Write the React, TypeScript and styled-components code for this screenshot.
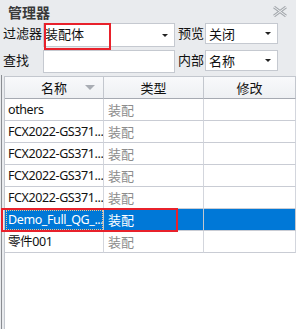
import React from "react";
import styled, { createGlobalStyle } from "styled-components";

const GlobalStyle = createGlobalStyle`
    html, body {
        margin: 0;
        padding: 0;
        background: #e9ebee;
    }
    body {
        font-family: "Noto Sans CJK SC", "Noto Sans", sans-serif;
        font-size: 13px;
        color: #000;
    }
`;

const Panel = styled.div`
    position: relative;
    width: 296px;
    height: 329px;
    display: flex;
    flex-direction: column;
    background: #e9ebee;
    overflow: hidden;
`;
const TitleBar = styled.div`
    height: 23px;
    display: flex;
    align-items: center;
    justify-content: space-between;
    padding: 0 8px 0 8px;
    box-sizing: border-box;
`;
const Title = styled.span`
    font-size: 14px;
    font-weight: bold;
    color: #3a3a3a;
    line-height: 1;
`;
const Form = styled.div`
    display: flex;
    flex-direction: column;
    gap: 3px;
`;
const FormRow = styled.div<{ $h: number }>`
    display: flex;
    align-items: flex-start;
    height: ${p => p.$h}px;
`;
const Label = styled.span<{ $w: number }>`
    width: ${p => p.$w}px;
    padding-left: ${p => (p.$w > 30 ? 3 : 0)}px;
    box-sizing: border-box;
    font-size: 13px;
    line-height: 20px;
    color: #111;
    white-space: nowrap;
`;
const Field = styled.div<{ $w: number; $h: number; $gap?: number }>`
    width: ${p => p.$w}px;
    height: ${p => p.$h}px;
    margin-right: ${p => p.$gap ?? 0}px;
    box-sizing: border-box;
    background: #fff;
    border: 1px solid #c5c9d0;
    display: flex;
    align-items: ${p => (p.$h > 22 ? "flex-start" : "center")};
    justify-content: space-between;
    padding: ${p => (p.$h > 22 ? "1px 6px 0 1px" : "0 6px 0 3px")};
    font-size: 13px;
    line-height: 18px;
    color: #111;
`;
const Arrow = styled.span`
    width: 0;
    height: 0;
    border-left: 3px solid transparent;
    border-right: 3px solid transparent;
    border-top: 3px solid #222;
`;
const FieldArrow = styled(Arrow)`
    align-self: center;
`;
const Table = styled.div`
    margin: 3px 0 0 4px;
    flex: 1;
    background: #fff;
    border-left: 1px solid #c3c7ce;
    border-top: 1px solid #c3c7ce;
    display: flex;
    flex-direction: column;
`;
const Grid = styled.div`
    display: grid;
    grid-template-columns: 99px 100px 1fr;
`;
const HeadCell = styled.div`
    position: relative;
    height: 22px;
    box-sizing: border-box;
    background: linear-gradient(#f8f9fb, #eef0f3);
    border-right: 1px solid #c3c7ce;
    border-bottom: 1px solid #a6aab2;
    display: flex;
    align-items: center;
    justify-content: center;
    font-size: 13px;
    color: #111;
`;
const SortArrow = styled.span`
    position: absolute;
    right: 8px;
    top: 8px;
    border-left: 5px solid transparent;
    border-right: 5px solid transparent;
    border-top: 5px solid #a9adb4;
`;
const Cell = styled.div<{ $sel?: boolean; $muted?: boolean; $focus?: boolean }>`
    height: 22px;
    box-sizing: border-box;
    padding-left: ${p => (p.$muted ? 4 : 3)}px;
    border-right: 1px solid ${p => (p.$sel ? "#c3c7ce" : "#d3d6dd")};
    border-bottom: 1px solid #c9ccd4;
    background: ${p => (p.$sel ? "#0078d7" : "#fff")};
    color: ${p => (p.$sel ? "#fff" : p.$muted ? "#8c8c8c" : "#111")};
    outline: ${p => (p.$focus ? "1px dotted #f3c38a" : "none")};
    outline-offset: -2px;
    line-height: 21px;
    white-space: nowrap;
    overflow: hidden;
    font-family: ${p => (p.$muted ? `"Noto Sans CJK SC"` : `"Noto Sans", "Noto Sans CJK SC"`)}, sans-serif;
    font-size: ${p => (p.$muted ? 13 : 12.5)}px;
    letter-spacing: ${p => (p.$muted ? 0 : -0.4)}px;
`;
const Mark = styled.div<{ $x: number; $y: number; $w: number; $h: number }>`
    position: absolute;
    left: ${p => p.$x}px;
    top: ${p => p.$y}px;
    width: ${p => p.$w}px;
    height: ${p => p.$h}px;
    box-sizing: border-box;
    border: 2px solid #e8212b;
    pointer-events: none;
`;
const EdgeLine = styled.div`
    position: absolute;
    left: 1px;
    top: 75px;
    bottom: 0;
    width: 1px;
    background: #8a8d92;
`;

const CloseIcon = () => (
    <svg width="16" height="11" viewBox="0 0 16 11">
        <path d="M2 1 L14 10 M14 1 L2 10" stroke="#a7abb0" strokeWidth="3" />
        <path d="M2 1 L14 10 M14 1 L2 10" stroke="#eef0f2" strokeWidth="1" />
    </svg>
);

type Row = { name: string; type: string; sel?: boolean };

const rows: Row[] = [
    { name: "others", type: "装配" },
    { name: "FCX2022-GS371...", type: "装配" },
    { name: "FCX2022-GS371...", type: "装配" },
    { name: "FCX2022-GS371...", type: "装配" },
    { name: "FCX2022-GS371...", type: "装配" },
    { name: "Demo_Full_QG_...", type: "装配", sel: true },
    { name: "零件001", type: "装配" },
];

const App: React.FC = () => {
    return (
        <Panel>
            <GlobalStyle />
            <TitleBar>
                <Title>管理器</Title>
                <CloseIcon />
            </TitleBar>
            <Form>
                <FormRow $h={24}>
                    <Label $w={43}>过滤器</Label>
                    <Field $w={132} $h={24} $gap={3}>
                        <span>装配体</span>
                        <FieldArrow />
                    </Field>
                    <Label $w={27}>预览</Label>
                    <Field $w={73} $h={21}>
                        <span>关闭</span>
                        <Arrow />
                    </Field>
                </FormRow>
                <FormRow $h={23}>
                    <Label $w={43}>查找</Label>
                    <Field $w={132} $h={23} $gap={3} />
                    <Label $w={27}>内部</Label>
                    <Field $w={73} $h={21}>
                        <span>名称</span>
                        <Arrow />
                    </Field>
                </FormRow>
            </Form>
            <Table>
                <Grid>
                    <HeadCell>
                        名称
                        <SortArrow />
                    </HeadCell>
                    <HeadCell>类型</HeadCell>
                    <HeadCell>修改</HeadCell>
                    {rows.map((r, i) => (
                        <React.Fragment key={i}>
                            <Cell $sel={r.sel} $focus={r.sel}>{r.name}</Cell>
                            <Cell $sel={r.sel} $muted>{r.type}</Cell>
                            <Cell $sel={r.sel} />
                        </React.Fragment>
                    ))}
                </Grid>
            </Table>
            <EdgeLine />
            <Mark $x={44} $y={23} $w={67} $h={27} />
            <Mark $x={1} $y={208} $w={177} $h={24} />
        </Panel>
    );
};

export default App;
